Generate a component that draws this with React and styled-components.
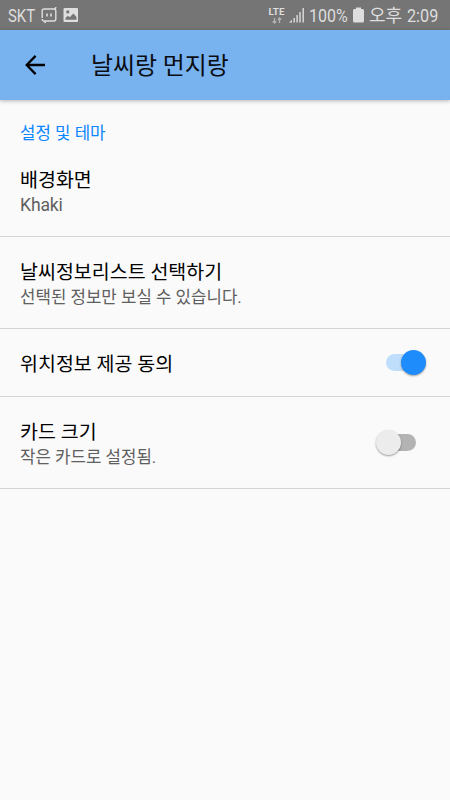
import { useState } from "react";
import styled, { createGlobalStyle } from "styled-components";

const GlobalStyle = createGlobalStyle`
  * {
    box-sizing: border-box;
  }

  body {
    margin: 0;
    background-color: #fafafa;
    font-family: Roboto, "Noto Sans CJK KR", sans-serif;
  }
`;

const Screen = styled.div`
  width: 450px;
  height: 800px;
  overflow: hidden;
  background-color: #fafafa;
`;

const StatusBar = styled.div`
  display: flex;
  align-items: center;
  justify-content: space-between;
  height: 30px;
  padding: 0 11px 0 8px;
  background-color: #757575;
  color: #dedede;
`;

const StatusGroup = styled.div`
  display: flex;
  align-items: center;
  height: 30px;
`;

// 상태바의 좁은 글자
const StatusText = styled.span`
  flex: none;
  width: ${({ $width }) => $width}px;
  margin-left: ${({ $left }) => $left || 0}px;
  padding-top: 1px;
  font-size: 18px;
  line-height: 30px;
  white-space: nowrap;
  transform: scaleX(${({ $scale }) => $scale || 1});
  transform-origin: left center;
`;

const StatusIcon = styled.svg`
  display: block;
  flex: none;
  margin-left: ${({ $left }) => $left || 0}px;
`;

const Network = styled.div`
  display: flex;
  flex-direction: column;
  align-items: center;
  width: 17px;
  height: 17px;
  font-size: 9.8px;
  font-weight: 700;
  line-height: 10px;
`;

const AppBar = styled.header`
  display: flex;
  align-items: center;
  height: 70px;
  padding-left: 20px;
  background-color: #78b3f0;
  box-shadow: 0 1px 4px rgba(0, 0, 0, 0.28);
`;

const BackButton = styled.button`
  display: flex;
  width: 30px;
  height: 30px;
  padding: 0;
  border: none;
  background: none;
  color: #000;
  cursor: pointer;
`;

const Title = styled.h1`
  margin: 0 0 0 41px;
  padding-top: 2px;
  font-size: 23.9px;
  font-weight: 400;
  line-height: 36px;
  color: #0a0d12;
`;

const Category = styled.h2`
  height: 45px;
  margin: 0;
  padding: 21px 20px 0;
  font-size: 16.8px;
  font-weight: 400;
  line-height: 24px;
  color: #0b85ff;
`;

const Row = styled.div`
  display: flex;
  align-items: center;
  justify-content: space-between;
  height: ${({ $height }) => $height}px;
  padding: 0 24px 0 20px;
  border-bottom: 1px solid #d4d4d4;
`;

const RowText = styled.div`
  padding-top: 4px;
`;

const RowTitle = styled.div`
  font-size: 19.5px;
  line-height: 26px;
  color: #000;
`;

const RowSummary = styled.div`
  font-size: ${({ $latin }) => ($latin ? 17.6 : 16.8)}px;
  letter-spacing: ${({ $latin }) => ($latin ? -0.15 : 0)}px;
  line-height: 23px;
  color: #606060;
`;

const Track = styled.button`
  display: flex;
  align-items: center;
  justify-content: ${({ $on }) => ($on ? "flex-end" : "flex-start")};
  width: 30px;
  height: 17px;
  margin-right: 10px;
  padding: 0;
  border: none;
  border-radius: 9px;
  background-color: ${({ $on }) => ($on ? "#bfdefb" : "#b3b3b3")};
  cursor: pointer;
`;

const Thumb = styled.span`
  flex: none;
  width: 25px;
  height: 25px;
  margin: ${({ $on }) => ($on ? "0 -10px 0 0" : "0 0 0 -10px")};
  border-radius: 50%;
  background-color: ${({ $on }) => ($on ? "#1e8cfa" : "#ececec")};
  box-shadow: 0 1px 2px rgba(0, 0, 0, 0.38);
`;

const Switch = ({ on, label, onToggle }) => (
  <Track $on={on} role="switch" aria-checked={on} aria-label={label} onClick={onToggle}>
    <Thumb $on={on} />
  </Track>
);

const App = () => {
  const [location, setLocation] = useState(true);
  const [bigCard, setBigCard] = useState(false);

  return (
    <>
      <GlobalStyle />
      <Screen>
        <StatusBar>
          <StatusGroup>
            <StatusText $width={33} $scale={0.83}>SKT</StatusText>
            {/* 메신저 알림 */}
            <StatusIcon width="16" height="18" viewBox="0 0 16 18" fill="none" stroke="#dedede" strokeWidth="1.4">
              <path d="M1.2 12V5Q1.2 3 3.2 3H12.8Q14.8 3 14.8 1M14.8 6V13Q14.8 15 12.8 15H3.2Q1.2 15 1.2 13M14.8 6V5Q14.8 3 12.8 3M3.2 15L4.5 17" />
              <path d="M6 7.4v3M10 7.4v3" strokeWidth="1.6" />
            </StatusIcon>
            {/* 사진 알림 */}
            <StatusIcon $left={6} width="16" height="16" viewBox="0 0 16 16" fill="#dedede">
              <path
                fillRule="evenodd"
                d="M1.5 1H14Q15 1 15 2V14Q15 15 14 15H1.5Q.5 15 .5 14V2Q.5 1 1.5 1ZM2.5 12.8H13.5V10L10.3 6.4 6.8 10.3 4.8 8.8 2.5 11ZM4.8 3.3a1.6 1.6 0 1 0 0 3.2a1.6 1.6 0 1 0 0-3.2Z"
              />
            </StatusIcon>
          </StatusGroup>
          <StatusGroup>
            <Network>
              LTE
              <svg width="10" height="7" viewBox="0 0 10 7" fill="none" stroke="#b4b4b4" strokeWidth="1.3">
                <path d="M2.5 1v5M.8 4.2 2.5 6l1.7-1.8M7.5 6V1M5.8 2.8 7.5 1l1.7 1.8" />
              </svg>
            </Network>
            <StatusIcon $left={4} width="16" height="16" viewBox="0 0 16 16" fill="#dedede">
              <path d="M0 15.5 3 12.7v2.8ZM4.5 11h1.4v4.5H4.5ZM7.4 8h1.4v7.5H7.4ZM10.3 5h1.4v10.5h-1.4ZM13.5 1h1.4v14.5h-1.4Z" />
            </StatusIcon>
            <StatusText $left={4} $width={40} $scale={0.89}>100%</StatusText>
            <StatusIcon $left={4} width="11" height="16" viewBox="0 0 11 16" fill="#dedede">
              <path d="M3 .5H8V2H9.5Q11 2 11 3.5V14Q11 15.5 9.5 15.5H1.5Q0 15.5 0 14V3.5Q0 2 1.5 2H3Z" />
            </StatusIcon>
            <StatusText $left={5} $width={38}>오후</StatusText>
            <StatusText $width={32} $scale={0.9}>2:09</StatusText>
          </StatusGroup>
        </StatusBar>

        <AppBar>
          <BackButton aria-label="뒤로">
            <svg width="30" height="30" viewBox="0 0 30 30" fill="none" stroke="currentColor" strokeWidth="2.3">
              <path d="M25 15H7M15.6 5.9 6.7 15l8.9 9.1" />
            </svg>
          </BackButton>
          <Title>날씨랑 먼지랑</Title>
        </AppBar>

        <Category>설정 및 테마</Category>
        <Row $height={92}>
          <RowText>
            <RowTitle>배경화면</RowTitle>
            <RowSummary $latin>Khaki</RowSummary>
          </RowText>
        </Row>
        <Row $height={92}>
          <RowText>
            <RowTitle>날씨정보리스트 선택하기</RowTitle>
            <RowSummary>선택된 정보만 보실 수 있습니다.</RowSummary>
          </RowText>
        </Row>
        <Row $height={68}>
          <RowText>
            <RowTitle>위치정보 제공 동의</RowTitle>
          </RowText>
          <Switch on={location} label="위치정보 제공 동의" onToggle={() => setLocation(!location)} />
        </Row>
        <Row $height={92}>
          <RowText>
            <RowTitle>카드 크기</RowTitle>
            <RowSummary>{bigCard ? "큰 카드로 설정됨." : "작은 카드로 설정됨."}</RowSummary>
          </RowText>
          <Switch on={bigCard} label="카드 크기" onToggle={() => setBigCard(!bigCard)} />
        </Row>
      </Screen>
    </>
  );
};

export default App;
